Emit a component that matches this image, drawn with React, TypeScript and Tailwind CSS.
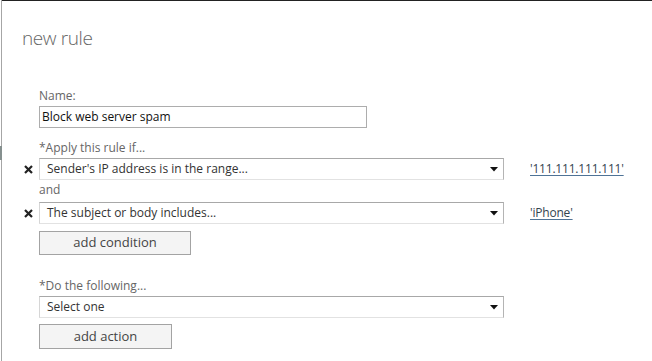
import React from "react";

const font = { fontFamily: '"Open Sans", "Noto Sans", sans-serif' };

function Arrow() {
  return (
    <svg width="8" height="5" viewBox="0 0 8 5" className="shrink-0">
      <path d="M0 0 H8 L4 4.5 Z" fill="#111" />
    </svg>
  );
}

function XIcon() {
  return (
    <div className="w-[15px] shrink-0 flex items-center">
      <svg width="9" height="9" viewBox="0 0 9 9">
        <path d="M1 1 L8 8 M8 1 L1 8" stroke="#222" strokeWidth="2.2" strokeLinecap="butt" />
      </svg>
    </div>
  );
}

function Select({ text }: { text: string }) {
  return (
    <div className="w-[465px] h-[22px] flex items-center justify-between border border-[#d6d6d6] border-t-[#a8a8a8] border-r-[#b4b4b4] border-b-[#e2e2e2] bg-white pl-[7px] pr-[5px] text-[12px] text-[#333]">
      <span>{text}</span>
      <Arrow />
    </div>
  );
}

function Label({ text, className = "" }: { text: string; className?: string }) {
  return (
    <div className={"h-[16px] leading-[16px] text-[12px] text-[#666] " + className}>{text}</div>
  );
}

function Link({ text }: { text: string }) {
  return (
    <span className="ml-[26px] text-[12px] font-medium tracking-[-0.2px] text-[#34444f] underline decoration-[#4f7396] underline-offset-2">
      {text}
    </span>
  );
}

export default function App() {
  return (
    <div className="w-[652px] h-[361px] bg-white flex overflow-hidden" style={font}>
      <div className="w-[2px] h-full flex flex-col shrink-0">
        <div className="h-[146px] border-r border-[#a6a6a6]" />
        <div className="h-[14px] bg-[#86908f]" />
        <div className="flex-1 border-r border-[#a6a6a6]" />
      </div>
      <div className="flex-1 border-t border-[#222] flex flex-col">
        <div className="pl-[20px] pt-[23px] h-[58px] text-[19px] leading-[28px] font-light tracking-[-0.4px] text-[#666]">new rule</div>
        <div className="pl-[37px] mt-[29px] flex flex-col">
          <Label text="Name:" />
          <div className="mt-[2px] w-[328px] h-[22px] border border-[#adadad] flex items-center pl-[2px] text-[12px] text-[#111]">
            Block web server spam
          </div>
          <Label text="*Apply this rule if..." className="mt-[12px]" />
          <div className="mt-[2px] -ml-[15px] flex items-center">
            <XIcon />
            <Select text="Sender's IP address is in the range..." />
            <Link text="'111.111.111.111'" />
          </div>
          <Label text="and" className="mt-[2px]" />
          <div className="mt-[4px] -ml-[15px] flex items-center">
            <XIcon />
            <Select text="The subject or body includes..." />
            <Link text="'iPhone'" />
          </div>
          <button className="mt-[7px] w-[152px] h-[24px] border border-[#a3a3a3] bg-[#f4f4f4] text-[13px] text-[#444] flex items-center justify-center">
            add condition
          </button>
          <Label text="*Do the following..." className="mt-[23px]" />
          <div className="mt-[2px]">
            <Select text="Select one" />
          </div>
          <button className="mt-[6px] w-[133px] h-[25px] border border-[#a3a3a3] bg-[#f4f4f4] text-[13px] text-[#444] flex items-center justify-center">
            add action
          </button>
        </div>
      </div>
    </div>
  );
}
